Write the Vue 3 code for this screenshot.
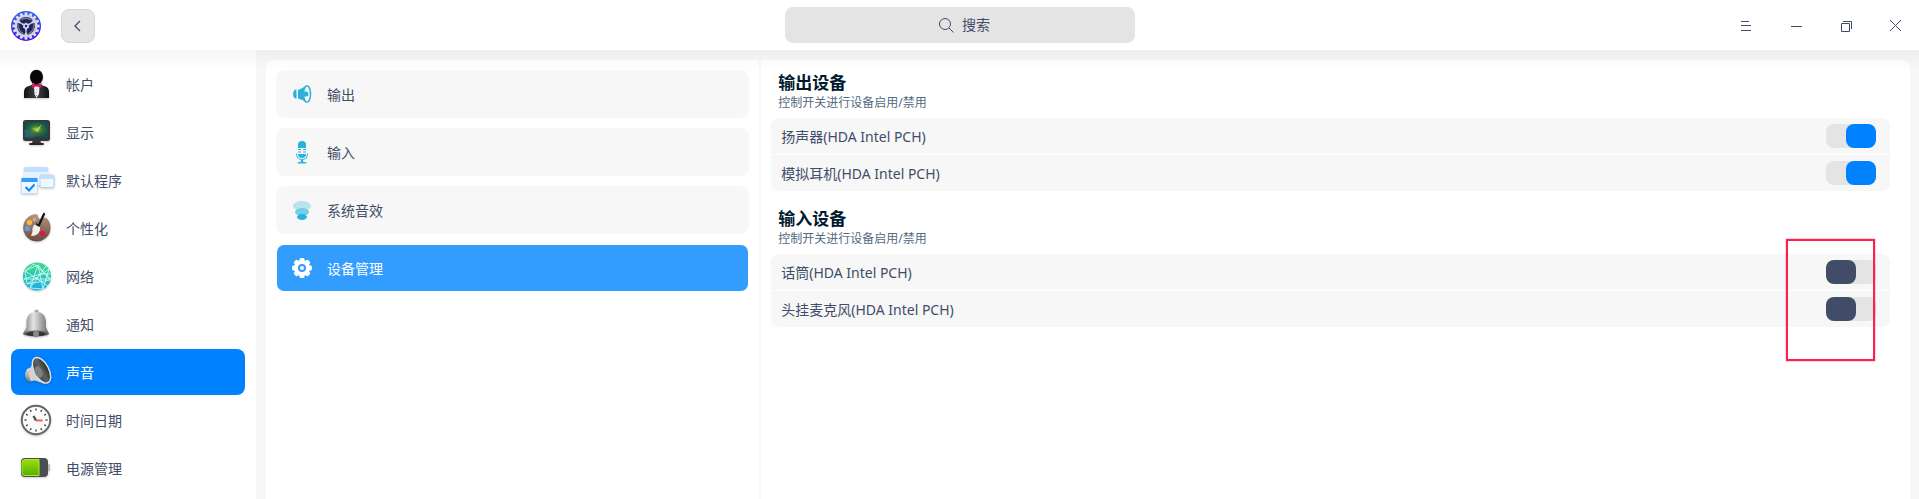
<script setup>
import { ref } from 'vue'

const categories = [
  { id: 'account', label: '帐户' },
  { id: 'display', label: '显示' },
  { id: 'defapp', label: '默认程序' },
  { id: 'personal', label: '个性化' },
  { id: 'network', label: '网络' },
  { id: 'notify', label: '通知' },
  { id: 'sound', label: '声音' },
  { id: 'datetime', label: '时间日期' },
  { id: 'power', label: '电源管理' },
]
const activeCategory = ref('sound')

const pages = [
  { id: 'output', label: '输出' },
  { id: 'input', label: '输入' },
  { id: 'effects', label: '系统音效' },
  { id: 'devices', label: '设备管理' },
]
const activePage = ref('devices')

const groups = ref([
  {
    id: 'out',
    title: '输出设备',
    devices: [
      { id: 'speaker', name: '扬声器(HDA Intel PCH)', on: true },
      { id: 'headphone', name: '模拟耳机(HDA Intel PCH)', on: true },
    ],
  },
  {
    id: 'in',
    title: '输入设备',
    marked: true,
    devices: [
      { id: 'mic', name: '话筒(HDA Intel PCH)', on: false },
      { id: 'headset', name: '头挂麦克风(HDA Intel PCH)', on: false },
    ],
  },
])
const search = ref('')

const ticks = Array.from({ length: 12 }, (_, i) => i * 30)
const teeth = Array.from({ length: 16 }, (_, i) => i * 22.5)
const cogs = Array.from({ length: 8 }, (_, i) => i * 45)
</script>

<template>
  <div class="window">
    <header class="titlebar">
      <div class="left">
        <svg class="logo" viewBox="0 0 30 30" aria-hidden="true">
          <defs>
            <linearGradient id="lg-logo" x1="0" y1="0" x2="0" y2="1">
              <stop offset="0" stop-color="#2f62f5" /><stop offset="1" stop-color="#4a10d8" />
            </linearGradient>
          </defs>
          <circle cx="15" cy="15" r="15" fill="url(#lg-logo)" />
          <rect v-for="a in teeth" :key="a" x="13.6" y="1.4" width="2.8" height="4" fill="#dfe3f2" :transform="`rotate(${a} 15 15)`" />
          <circle cx="15" cy="15" r="11.4" fill="#cfd3e3" />
          <g v-for="a in [0, 120, 240]" :key="a" :transform="`rotate(${a} 15 15)`">
            <path d="M8.2 9.2A9 9 0 0 1 21.8 9.2Q20 12.4 16.8 12.8L15 11.6L13.2 12.8Q10 12.4 8.2 9.2Z" fill="#1e2460" />
            <path d="M9.500 9Q15 5.500 20.500 9" fill="none" stroke="#777d86" stroke-width="1.300" />
          </g>
          <circle cx="15" cy="15" r="1.2" fill="#27246b" />
        </svg>
        <button class="back" type="button" aria-label="返回">
          <svg viewBox="0 0 14 14"><path d="M9 2L4 7L9 12" fill="none" stroke="#414d68" stroke-width="1.3" /></svg>
        </button>
      </div>
      <label class="search">
        <svg viewBox="0 0 15 15" aria-hidden="true">
          <circle cx="6" cy="6" r="5.5" fill="none" stroke="#414d68" /><path d="M10 10L14.5 14.5" stroke="#414d68" />
        </svg>
        <input v-model="search" type="text" placeholder="搜索" aria-label="搜索" />
      </label>
      <div class="controls">
        <button type="button" aria-label="菜单">
          <svg viewBox="0 0 12 12"><path d="M1 2.5H9M1 6.5H11M1 11.5H11" /></svg>
        </button>
        <button type="button" aria-label="最小化">
          <svg viewBox="0 0 12 12"><path d="M1 7.5H12" /></svg>
        </button>
        <button type="button" aria-label="还原">
          <svg viewBox="0 0 12 12"><path d="M1.5 4.5H9.5V12.5H1.5ZM3 2.5H11.5V10" /></svg>
        </button>
        <button class="close" type="button" aria-label="关闭">
          <svg viewBox="0 0 12 12"><path d="M1 1L12 12M12 1L1 12" /></svg>
        </button>
      </div>
    </header>

    <div class="body">
      <nav class="sidebar">
        <button
          v-for="c in categories" :key="c.id" type="button"
          class="category" :class="{ active: c.id === activeCategory }"
          @click="activeCategory = c.id"
        >
          <svg class="cat-icon" viewBox="0 0 32 32" aria-hidden="true">
            <g v-if="c.id === 'account'">
              <defs><linearGradient id="lg-suit"><stop offset="0" stop-color="#111" /><stop offset=".5" stop-color="#444" /><stop offset="1" stop-color="#111" /></linearGradient></defs>
              <path d="M4 30V24Q4 19 9 18L14 16H19L24 18Q29 19 29 24V30Z" fill="url(#lg-suit)" />
              <path d="M14 18H19.500L19 26L16.5 30L14.500 26Z" fill="#f1f1f1" />
              <path d="M16.5 21V28" stroke="#999" stroke-width=".8" stroke-dasharray="1 2" />
              <ellipse cx="16.500" cy="9" rx="6.500" ry="7.300" fill="#060606" />
              <path d="M12 15L16 17H17L21.500 15V20L17 18.500H16L12 20Z" fill="#e0126a" />
            </g>
            <g v-else-if="c.id === 'display'">
              <defs><radialGradient id="rg-scr"><stop offset="0" stop-color="#a8c81c" /><stop offset=".5" stop-color="#2f7636" /><stop offset="1" stop-color="#164c50" /></radialGradient></defs>
              <path d="M13 24H20L21 27H12Z" fill="#333" />
              <rect x="9" y="27" width="15" height="2" rx="1" fill="#292929" />
              <rect x="3" y="4" width="27" height="21" rx="2.500" fill="#353739" />
              <rect x="4.500" y="5.500" width="24" height="16" rx="1" fill="url(#rg-scr)" />
              <path d="M4.500 13L14 17V21.500H4.500Z" fill="#367083" opacity=".6" />
              <path d="M12 12L17 13L22 8L18 15L16 18L16 14Z" fill="#a9e26e" />
              <path d="M16 15L18 18L16 17Z" fill="#b12" />
            </g>
            <g v-else-if="c.id === 'defapp'">
              <rect x="4" y="3" width="24" height="18" rx="2" fill="#e8f3ff" />
              <path d="M4 8V5Q4 3 6 3H26Q28 3 28 5V8Z" fill="#c3dfff" />
              <rect x="20" y="11" width="14" height="12.500" rx="1.500" fill="#f1f7ff" stroke="#9cccf8" stroke-width=".8" />
              <path d="M20 15V12.500Q20 11 21.500 11H32Q33.500 11 33.500 12.500V15Z" fill="#c3dfff" />
              <rect x="1.500" y="14" width="16" height="15.500" rx="1" fill="#eef6ff" stroke="#bbdcfa" stroke-width=".8" />
              <rect x="1.500" y="14" width="16" height="4" fill="#309dff" />
              <path d="M5.500 23L9 26.500L14.500 20.500" fill="none" stroke="#1688f4" stroke-width="2" />
            </g>
            <g v-else-if="c.id === 'personal'">
              <defs><linearGradient id="lg-pal" x1="0" y1="0" x2="0" y2="1"><stop offset="0" stop-color="#b39480" /><stop offset="1" stop-color="#6c4a40" /></linearGradient></defs>
              <path d="M18 4C18 1.500 13 2 9 4.500A13.700 13.700 0 1 0 27 6.500C24 4 22 8 20 7C18 6 18 5 18 4Z" fill="url(#lg-pal)" />
              <circle cx="9.500" cy="10.500" r="2.700" fill="#f6b93c" /><circle cx="14.500" cy="7.500" r="2.100" fill="#cba48e" />
              <circle cx="7.500" cy="16.500" r="2.700" fill="#5a9fe4" /><circle cx="22.500" cy="21.500" r="2.700" fill="#db1648" />
              <path d="M24 2L19 13" stroke="#111" stroke-width="2.200" stroke-linecap="round" />
              <path d="M16 12L20 14V18Q18 24 11 24Q13 20 12.500 17Q13 13 16 12Z" fill="#f3f0e9" />
              <path d="M16 11L20.500 13.500L19.500 15L15.500 13Z" fill="#222" />
            </g>
            <g v-else-if="c.id === 'network'">
              <defs><linearGradient id="lg-net" x1="0" y1="0" x2="0" y2="1"><stop offset="0" stop-color="#3adc88" /><stop offset="1" stop-color="#1aaee8" /></linearGradient></defs>
              <circle cx="17" cy="16.500" r="14" fill="url(#lg-net)" />
              <path d="M5 11L18 5L30 20L7 24ZM5 11L28 26M18 5L10 28M18 5L23 29M4 19H31L14 4L5 11M7 24L29 9L23 29L10 28L26 6M4 19L20 14L31 14" fill="none" stroke="#d9fff4" stroke-width=".8" />
            </g>
            <g v-else-if="c.id === 'notify'">
              <defs><linearGradient id="lg-bell"><stop offset="0" stop-color="#777" /><stop offset=".4" stop-color="#e4e4e4" /><stop offset="1" stop-color="#696969" /></linearGradient></defs>
              <circle cx="16.500" cy="3.500" r="2" fill="#aaa" />
              <path d="M6.500 19V13Q7 4 16.500 4Q25 4 26 13V19L29 26H3Z" fill="url(#lg-bell)" />
              <ellipse cx="16" cy="25.500" rx="13" ry="3" fill="#646464" />
              <ellipse cx="16" cy="26" rx="10" ry="2.200" fill="#333" /><circle cx="16" cy="26" r="3" fill="#888" />
            </g>
            <g v-else-if="c.id === 'sound'">
              <defs>
                <linearGradient id="lg-cone"><stop offset="0" stop-color="#3a3a3a" /><stop offset=".5" stop-color="#606366" /><stop offset="1" stop-color="#282828" /></linearGradient>
                <linearGradient id="lg-horn" x1="0" y1="0" x2="0" y2="1"><stop offset="0" stop-color="#eee" /><stop offset="1" stop-color="#777" /></linearGradient>
              </defs>
              <path d="M7 13L12 11L15 24L10 26Q5 24 5 18Z" fill="url(#lg-horn)" />
              <path d="M9 15L13 6L25 28L15 24.500L11 25Q8 20 9 15Z" fill="#d2d2d2" />
              <ellipse cx="21.500" cy="14.300" rx="7.200" ry="14" transform="rotate(-28 21.500 14.300)" fill="url(#lg-cone)" stroke="#e2e2e2" stroke-width="1.400" />
              <ellipse cx="18.500" cy="16" rx="3.800" ry="6" transform="rotate(-25 18.500 16)" fill="#7c8084" />
            </g>
            <g v-else-if="c.id === 'datetime'">
              <circle cx="16" cy="16" r="14.200" fill="#fafafa" stroke="#666" stroke-width="1.900" />
              <path v-for="a in ticks" :key="a" d="M16 4.500V6.500" stroke="#222" stroke-width="1.200" :transform="`rotate(${a} 16 16)`" />
              <path d="M13.500 12L16 16.500" stroke="#4c5355" stroke-width="2.400" />
              <path d="M16 16.500H22.500" stroke="#f45050" stroke-width="1.800" />
            </g>
            <g v-else>
              <defs><linearGradient id="lg-bat" x1="0" y1="0" x2="0" y2="1"><stop offset="0" stop-color="#9ade0b" /><stop offset="1" stop-color="#56b000" /></linearGradient></defs>
              <rect x="27" y="12" width="3" height="7" rx="1" fill="#bbb" />
              <rect x="1" y="6" width="27" height="19" rx="4" fill="#4c4e51" />
              <path d="M19 7.500V23.500H5Q2 23.500 2 20.500V10.500Q2 7.500 5 7.500Z" fill="url(#lg-bat)" stroke="#a9ed31" />
            </g>
          </svg>
          <span>{{ c.label }}</span>
        </button>
      </nav>

      <main class="panel">
        <nav class="pages">
          <button
            v-for="p in pages" :key="p.id" type="button"
            class="page" :class="{ active: p.id === activePage }"
            @click="activePage = p.id"
          >
            <svg class="page-icon" viewBox="0 0 24 24" aria-hidden="true">
              <g v-if="p.id === 'output'" fill="#2ab2dc">
                <path d="M6.500 7.500V16.500H5Q3 15 3 12Q3 9 5 7.500Z" />
                <path d="M8 8L12.500 6L16 3.500V20.500L12.500 18L8 16.500Z" />
                <ellipse cx="17" cy="12" rx="3.500" ry="8.300" fill="#f7f7f7" stroke="#2ab2dc" stroke-width="1.500" />
                <path d="M13.800 9.500H16A2.500 2.500 0 0 1 16 14.500H13.800Z" />
              </g>
              <g v-else-if="p.id === 'input'" fill="#2ab2dc">
                <path d="M8 8V4.500Q8 1 12 1Q16 1 16 4.500V8Z" />
                <path d="M8 9H11V10H8ZM13 9H16V10H13ZM8 11.500H11V12.500H8ZM13 11.500H16V12.500H13ZM8 14H16Q16 18 12 18Q8 18 8 14Z" />
                <path d="M6.500 13.500Q6.500 19.500 12 19.500Q17.500 19.500 17.500 13.500" fill="none" stroke="#2ab2dc" />
                <path d="M11 19.500H13V21.500L16.500 22.500V23.500H7.500V22.500L11 21.500Z" />
              </g>
              <g v-else-if="p.id === 'effects'">
                <ellipse cx="12" cy="8" rx="9" ry="5" fill="#b9e3ef" />
                <ellipse cx="12" cy="14" rx="7" ry="4" fill="#75cce5" />
                <ellipse cx="12" cy="19" rx="5" ry="3" fill="#2ab2dc" />
              </g>
              <g v-else fill="#fff">
                <rect v-for="a in cogs" :key="a" x="9.500" y="2" width="5" height="7" rx="1.500" :transform="`rotate(${a} 12 12)`" />
                <circle cx="12" cy="12" r="8" />
                <circle cx="12" cy="12" r="3" fill="#fff" stroke="#339cff" stroke-width="2" />
              </g>
            </svg>
            <span>{{ p.label }}</span>
          </button>
        </nav>

        <div class="detail">
          <section v-for="g in groups" :key="g.id" class="group">
            <h2>{{ g.title }}</h2>
            <p>控制开关进行设备启用/禁用</p>
            <div class="rows">
              <label v-for="d in g.devices" :key="d.id" class="row">
                <span>{{ d.name }}</span>
                <input v-model="d.on" class="switch" type="checkbox" role="switch" />
              </label>
              <div v-if="g.marked" class="marker"></div>
            </div>
          </section>
        </div>
      </main>
    </div>
  </div>
</template>

<style>
body {
  margin: 0;
}
</style>

<style scoped>
.window {
  display: flex;
  flex-direction: column;
  min-height: 100vh;
  background: #f7f7f7;
  color: #414d68;
  font: 14px/20px "Noto Sans", "Noto Sans CJK SC", sans-serif;
}
.window * {
  box-sizing: border-box;
}
button {
  margin: 0;
  padding: 0;
  border: 0;
  background: none;
  color: inherit;
  font: inherit;
}
svg {
  display: block;
  flex: none;
  overflow: visible;
}
.titlebar {
  position: relative;
  display: grid;
  grid-template-columns: 1fr 350px 1fr;
  align-items: center;
  height: 50px;
  background: #fff;
}
.titlebar::after {
  content: "";
  position: absolute;
  top: 100%;
  left: 0;
  right: 0;
  height: 20px;
  background: linear-gradient(rgba(0, 0, 0, 0.035), transparent);
  pointer-events: none;
}
.left {
  display: flex;
  align-items: center;
  gap: 20px;
  padding: 2px 0 0 11px;
}
.logo {
  width: 30px;
  height: 30px;
}
.back {
  display: grid;
  place-items: center;
  width: 34px;
  height: 34px;
  border: 1px solid #d7d7d7;
  border-radius: 8px;
  background: #e5e5e5;
}
.back svg {
  width: 14px;
  height: 14px;
}
.search {
  display: flex;
  align-items: center;
  justify-content: center;
  gap: 8px;
  height: 36px;
  padding-left: 10px;
  border-radius: 8px;
  background: #e4e4e4;
}
.search svg {
  width: 15px;
  height: 15px;
}
.search input {
  width: 28px;
  padding: 0;
  border: 0;
  outline: 0;
  background: none;
  color: inherit;
  font: inherit;
}
.search:focus-within input {
  width: 240px;
}
.search input::placeholder {
  color: #414d68;
  opacity: 1;
}
.controls {
  display: flex;
  justify-content: flex-end;
}
.controls button {
  display: grid;
  place-items: center;
  width: 50px;
  height: 50px;
}
.controls .close {
  width: 48px;
}
.controls svg {
  width: 12px;
  height: 12px;
  fill: none;
  stroke: #414d68;
}
.body {
  display: flex;
  flex: 1;
  gap: 10px;
  padding-right: 9px;
}
.sidebar {
  flex: none;
  width: 256px;
  padding: 10px 10px 7px;
  background: #fff;
}
.category {
  display: flex;
  align-items: center;
  gap: 14px;
  width: 100%;
  height: 48px;
  padding-left: 9px;
  border: 1px solid transparent;
  border-radius: 9px;
  background-clip: padding-box;
}
.category.active {
  background-color: #0081ff;
  color: #fff;
}
.category span,
.page span,
.row span {
  padding-top: 2px;
}
.cat-icon {
  width: 32px;
  height: 32px;
  filter: drop-shadow(0 1px 1px rgba(0, 0, 0, 0.2));
}
.panel {
  display: flex;
  flex: 1;
  margin-top: 10px;
  border-radius: 8px 8px 0 0;
  background: #fff;
}
.pages {
  display: flex;
  flex-direction: column;
  gap: 10px;
  width: 30%;
  padding: 10px;
}
.page {
  display: flex;
  align-items: center;
  gap: 13px;
  height: 48px;
  padding-left: 13px;
  border: 1px solid #f7f7f7;
  border-radius: 8px;
  background-color: #f7f7f7;
  background-clip: padding-box;
}
.page.active {
  border-color: transparent;
  background-color: #339cff;
  color: #fff;
}
.page-icon {
  width: 24px;
  height: 24px;
}
.detail {
  flex: 1;
  padding: 11px 20px 10px 10px;
  border-left: 2px solid #f7f7f7;
}
.group + .group {
  margin-top: 16px;
}
h2 {
  margin: 0 7px;
  color: #001a2e;
  font-size: 17px;
  line-height: 24px;
  font-weight: 700;
}
p {
  margin: 0 7px 7px;
  color: #526a7f;
  font-size: 12px;
  line-height: 16px;
}
.rows {
  position: relative;
  display: grid;
  gap: 1px;
}
.row {
  display: flex;
  align-items: center;
  justify-content: space-between;
  height: 36px;
  padding: 0 14px 0 10px;
  background: #f7f7f7;
}
.row:first-child {
  border-radius: 8px 8px 0 0;
}
.row:nth-child(2) {
  border-radius: 0 0 8px 8px;
}
.switch {
  appearance: none;
  display: flex;
  width: 50px;
  height: 24px;
  margin: 0;
  border-radius: 8px;
  background: #e4e4e4;
}
.switch::before {
  content: "";
  width: 30px;
  border-radius: 8px;
  background: #414d68;
}
.switch:checked {
  justify-content: flex-end;
}
.switch:checked::before {
  background: #0081ff;
}
.marker {
  position: absolute;
  top: -15px;
  right: 15px;
  width: 89px;
  height: 122px;
  border: 2px solid #ff1e4e;
  box-shadow: 0 0 1px #ff1e4e;
  pointer-events: none;
}
</style>
